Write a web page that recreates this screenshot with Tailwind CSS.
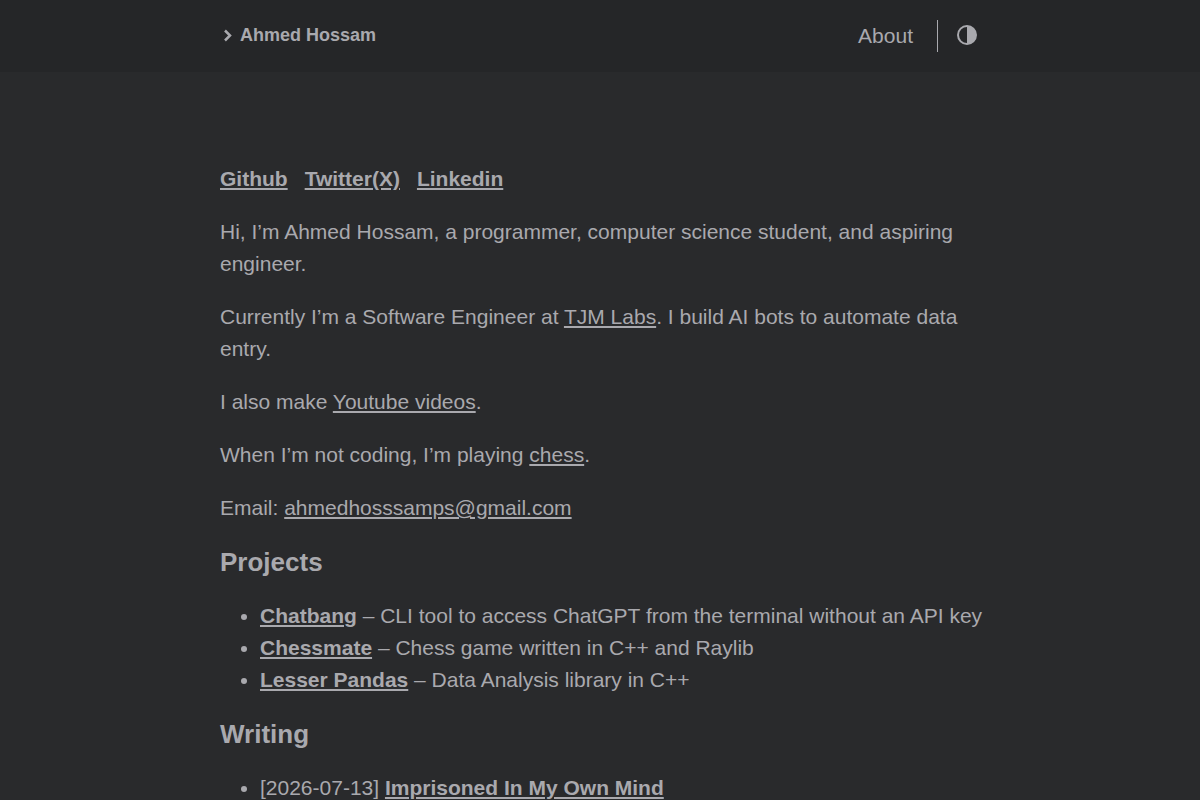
<!DOCTYPE html>
<html lang="en">
<head>
<meta charset="utf-8">
<meta name="viewport" content="width=device-width, initial-scale=1">
<title>Ahmed Hossam</title>
<script src="https://cdn.jsdelivr.net/npm/@tailwindcss/browser@4"></script>
</head>
<body class="h-screen overflow-hidden bg-[#292a2c] font-['Liberation_Sans',Arial,sans-serif] text-[21px] leading-8 text-[#a9a9ae]">
<header class="bg-[#252628]">
<div class="mx-auto flex h-[72px] max-w-[760px] items-center justify-between">
<a href="#" class="flex items-center gap-1 pb-0.5 text-lg font-bold">
<svg class="size-4" viewBox="0 0 16 16" fill="none" stroke="currentColor" stroke-width="2.5"><path d="M5 3.5 10 8.5 5 13.5"/></svg>
<span>Ahmed Hossam</span>
</a>
<div class="flex items-center pr-0.5">
<nav><a href="#">About</a></nav>
<button type="button" aria-label="Toggle theme" class="ml-6 flex h-8 items-center border-l border-current pb-0.5 pl-[18px]">
<svg class="size-[22px]" viewBox="0 0 22 22" fill="currentColor"><path fill-rule="evenodd" d="M11 1a10 10 0 1 0 0 20 10 10 0 0 0 0-20Zm0 2v16a8 8 0 0 1 0-16Z"/></svg>
</button>
</div>
</div>
</header>
<main class="mx-auto flex max-w-[760px] flex-col gap-[21px] pt-[91px]">
<p class="flex gap-[17px] font-bold"><a class="underline" href="#">Github</a><a class="underline" href="#">Twitter(X)</a><a class="underline" href="#">Linkedin</a></p>
<p>Hi, I’m Ahmed Hossam, a programmer, computer science student, and aspiring engineer.</p>
<p>Currently I’m a Software Engineer at <a class="underline" href="#">TJM Labs</a>. I build AI bots to automate data entry.</p>
<p>I also make <a class="underline" href="#">Youtube videos</a>.</p>
<p>When I’m not coding, I’m playing <a class="underline" href="#">chess</a>.</p>
<p>Email: <a class="underline" href="#">ahmedhosssamps@gmail.com</a></p>
<h2 class="text-[26px] leading-[34px] font-bold">Projects</h2>
<ul class="list-disc pl-10 md:whitespace-nowrap">
<li><a class="font-bold underline" href="#">Chatbang</a> – CLI tool to access ChatGPT from the terminal without an API key</li>
<li><a class="font-bold underline" href="#">Chessmate</a> – Chess game written in C++ and Raylib</li>
<li><a class="font-bold underline" href="#">Lesser Pandas</a> – Data Analysis library in C++</li>
</ul>
<h2 class="text-[26px] leading-[34px] font-bold">Writing</h2>
<ul class="list-disc pl-10">
<li>[2026-07-13] <a class="font-bold underline" href="#">Imprisoned In My Own Mind</a></li>
</ul>
</main>
</body>
</html>
